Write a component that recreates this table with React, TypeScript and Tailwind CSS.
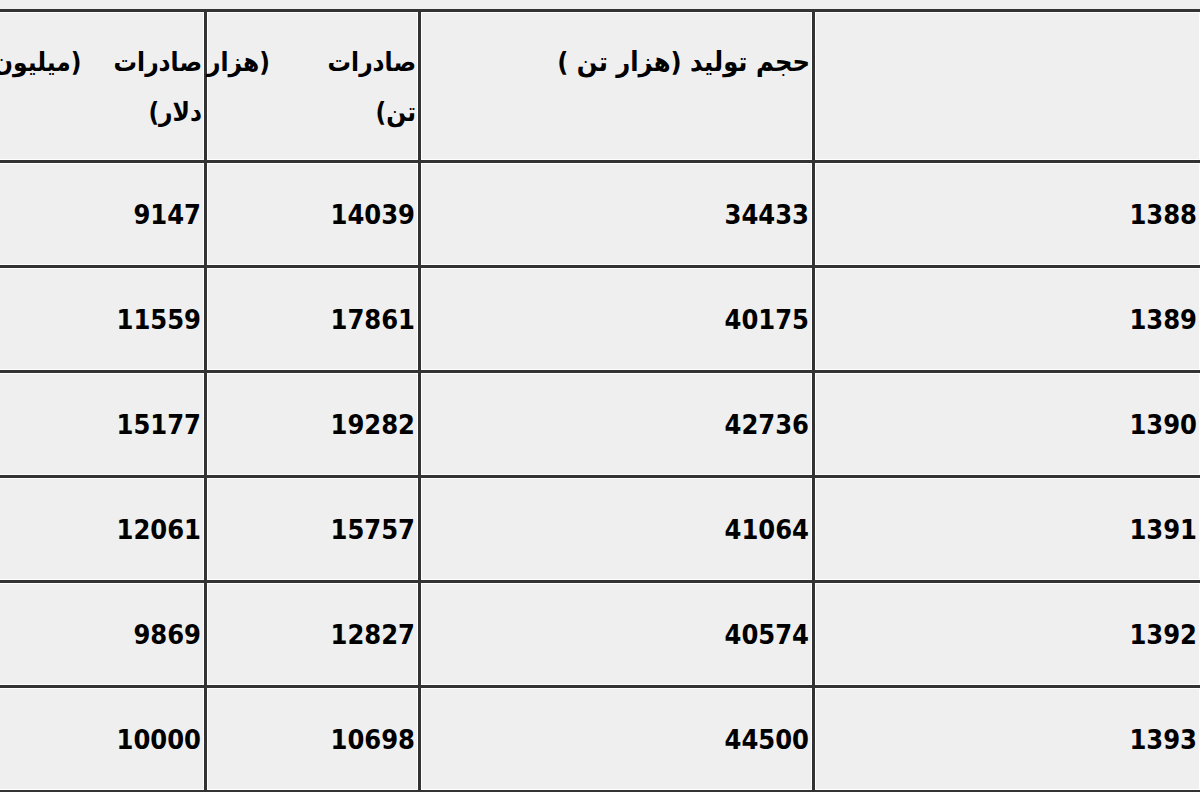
const rows = [
  ['1388', '34433', '14039', '9147'],
  ['1389', '40175', '17861', '11559'],
  ['1390', '42736', '19282', '15177'],
  ['1391', '41064', '15757', '12061'],
  ['1392', '40574', '12827', '9869'],
  ['1393', '44500', '10698', '10000'],
]

const cell = 'bg-[#efefef] shadow-[inset_0_0_0_1px_#ffffff]'

export default function App() {
  return (
    <div
      className="w-[1200px] h-[792px] overflow-hidden bg-[#efefef] text-black font-bold"
      style={{ fontFamily: '"DejaVu Sans Condensed", "DejaVu Sans", sans-serif' }}
    >
      <div
        dir="rtl"
        className="ml-[-10px] mt-[9px] w-[1213px] grid grid-cols-[385px_391px_211px_211px] grid-rows-[148px_repeat(6,102px)] gap-[3px] p-[3px] bg-[#333333]"
      >
        {/* header */}
        <div className={cell} />
        <div className={`${cell} pt-[25px] pr-[2px] text-[27px] leading-[50px]`}>
          حجم تولید (هزار تن )
        </div>
        <div className={`${cell} pt-[25px] pr-[2px] text-[26px] leading-[50px]`}>
          <div className="flex justify-between">
            <span>صادرات</span>
            <span>(هزار</span>
          </div>
          <div>تن)</div>
        </div>
        <div className={`${cell} pt-[25px] pr-[2px] text-[26px] leading-[50px]`}>
          <div className="flex justify-between">
            <span>صادرات</span>
            <span>(میلیون</span>
          </div>
          <div>دلار)</div>
        </div>

        {rows.map((r) =>
          r.map((v, i) => (
            <div
              key={r[0] + '-' + i}
              className={`${cell} flex items-center justify-start pr-[3px] pt-[3px] text-[27px]`}
            >
              {v}
            </div>
          ))
        )}
      </div>
    </div>
  )
}
